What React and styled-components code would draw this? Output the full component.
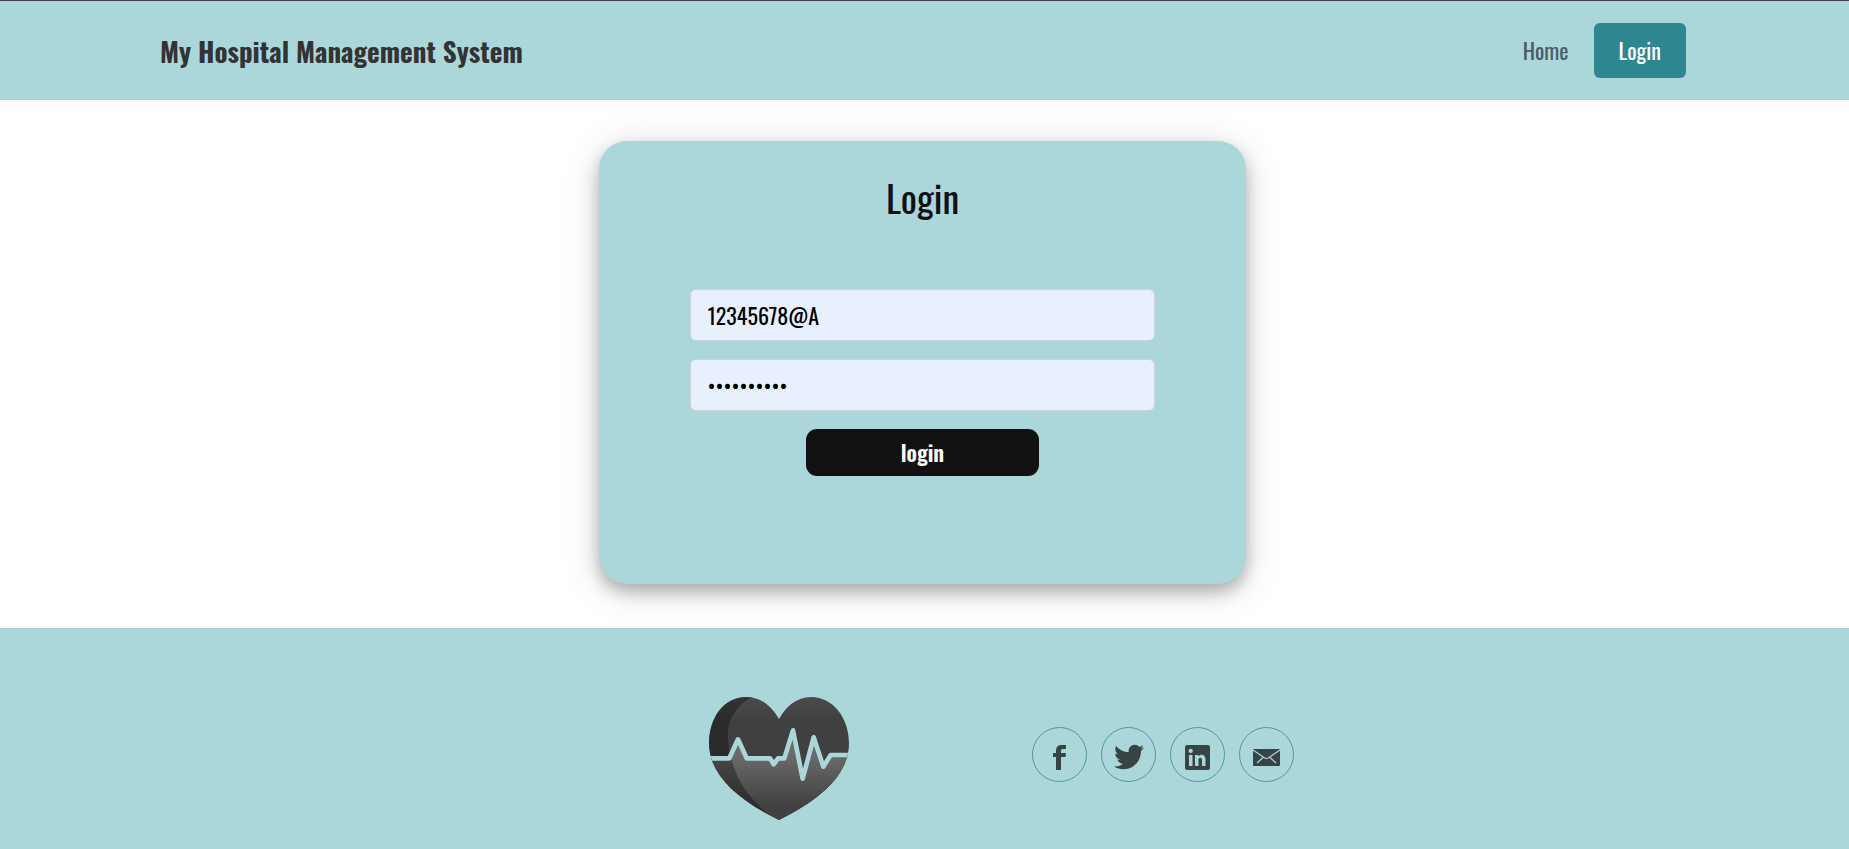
import React, { useState } from "react";
import styled, { createGlobalStyle, ThemeProvider } from "styled-components";
import { FaTwitter } from "react-icons/fa";

const theme = {
  aqua: "#abd7da",
  teal: "#2e8690",
  ink: "#111111",
  font: '"Oswald", "Liberation Sans Narrow", "DejaVu Sans Condensed", sans-serif',
};

const GlobalStyle = createGlobalStyle`
  *, *::before, *::after { box-sizing: border-box; }
  body {
    margin: 0;
    background: #ffffff;
    font-family: ${theme.font};
    color: ${theme.ink};
  }
`;

const Page = styled.div`
  display: flex;
  flex-direction: column;
  min-height: 100vh;
`;

const Header = styled.header`
  display: flex;
  align-items: center;
  justify-content: space-between;
  padding: 22px 163px 22px 160px;
  border-top: 1px solid #3e3c42;
  background: ${(p) => p.theme.aqua};
`;

const Brand = styled.a`
  font-size: 27px;
  line-height: 40px;
  font-weight: 700;
  color: #333333;
  text-decoration: none;
  white-space: nowrap;
`;

const Nav = styled.nav`
  display: flex;
  align-items: center;
  gap: 25px;
`;

const NavLink = styled.a`
  font-size: 22px;
  line-height: 31px;
  padding: ${(p) => (p.$filled ? "12px 25px" : "12px 0")};
  border-radius: 6px;
  color: ${(p) => (p.$filled ? "#ffffff" : "#4a5a68")};
  background: ${(p) => (p.$filled ? p.theme.teal : "transparent")};
  text-decoration: none;
`;

const Main = styled.main`
  display: flex;
  justify-content: center;
  padding: 41px 0 44px;
`;

const Card = styled.section`
  display: flex;
  flex-direction: column;
  align-items: center;
  width: 35%;
  margin-right: 4px;
  padding: 32px 0 108px;
  border-radius: 28px;
  background: ${(p) => p.theme.aqua};
  box-shadow: 0 8px 16px rgba(0, 0, 0, 0.26), 0 6px 40px rgba(0, 0, 0, 0.14);
`;

const Title = styled.h1`
  margin: 0 0 68px;
  font-size: 38px;
  line-height: 48px;
  font-weight: 400;
`;

const Form = styled.form`
  display: flex;
  flex-direction: column;
  align-items: center;
  gap: 18px;
  width: 72%;
`;

const Field = styled.input`
  width: 100%;
  height: 52px;
  padding: 0 17px;
  border: 1px solid #ced4da;
  border-radius: 6px;
  background: #e8f0fe;
  color: #000000;
  font-family: inherit;
  font-size: 22px;
  outline: none;
`;

const Submit = styled.button`
  width: 50%;
  height: 47px;
  padding: 0 0 2px;
  border: 0;
  border-radius: 11px;
  background: ${(p) => p.theme.ink};
  color: #ffffff;
  font-family: inherit;
  font-size: 22px;
  font-weight: 600;
  cursor: pointer;
`;

const Footer = styled.footer`
  display: flex;
  flex-grow: 1;
  align-items: flex-start;
  justify-content: center;
  gap: 183px;
  padding: 62px 0 29px 154px;
  background: ${(p) => p.theme.aqua};
`;

const HeartImage = styled.svg`
  width: 140px;
  height: 130px;
`;

const Socials = styled.ul`
  display: flex;
  align-items: center;
  gap: 14px;
  height: 128px;
  margin: 0;
  padding: 0;
  list-style: none;
`;

const SocialLink = styled.a`
  display: flex;
  align-items: center;
  justify-content: center;
  width: 55px;
  height: 55px;
  padding-top: 6px;
  border: 1px solid #4a979f;
  border-radius: 50%;
  color: #384444;
`;

const HEART =
  "M267 117C245 80 215 51 168 51C100 51 57 115 57 190C57 280 135 355 267 420C399 355 477 280 477 190C477 115 430 51 363 51C320 51 288 80 267 117Z";
const PULSE =
  "57 235 118 235 144 178 170 235 240 235 251 253 264 235 283 235 309 151 338 296 371 172 400 260 422 225 477 225";

function Heart() {
  return (
    <HeartImage viewBox="57 30 420 390" role="img" aria-label="Heartbeat">
      <defs>
        <linearGradient id="upper" x1="0" y1="51" x2="0" y2="120" gradientUnits="userSpaceOnUse">
          <stop offset="0" stopColor="#4b4b4b" />
          <stop offset="1" stopColor="#404040" />
        </linearGradient>
        <linearGradient id="lower" x1="0" y1="225" x2="0" y2="380" gradientUnits="userSpaceOnUse">
          <stop offset="0" stopColor="#6b6b6b" />
          <stop offset="1" stopColor="#404040" />
        </linearGradient>
        <clipPath id="heart">
          <path d={HEART} />
        </clipPath>
      </defs>
      <g clipPath="url(#heart)">
        <rect x="57" y="51" width="420" height="370" fill="url(#upper)" />
        <polygon points={`${PULSE} 477 421 57 421`} fill="url(#lower)" />
        <path
          d="M187 51C135 78 108 125 114 180C122 270 160 345 247 412L200 421H50V40Z"
          fill="#000000"
          fillOpacity="0.32"
        />
        <polyline
          points={PULSE}
          fill="none"
          stroke={theme.aqua}
          strokeWidth="14"
          strokeLinejoin="round"
        />
      </g>
    </HeartImage>
  );
}

function FacebookIcon() {
  return (
    <svg width="13" height="25" viewBox="0 0 13 25" fill="currentColor" aria-hidden="true">
      <path d="M3 25V12H0V8H3V6C3 2 5 0 8.5 0H13V4H10C8.500 4 8 4.700 8 6V8H13L12.500 12H8V25Z" />
    </svg>
  );
}

function LinkedinIcon() {
  return (
    <svg width="25" height="25" viewBox="0 0 25 25" fill="currentColor" aria-hidden="true">
      <path
        fillRule="evenodd"
        d="M2 0H23Q25 0 25 2V23Q25 25 23 25H2Q0 25 0 23V2Q0 0 2 0ZM4 10V21H7.500V10ZM5.700 3.800A2.100 2.100 0 1 0 5.700 8A2.100 2.100 0 1 0 5.700 3.800ZM10 10V21H13.500V15C13.500 12 17 12 17 15V21H20.500V14C20.500 9 15 8.500 13.500 11.500V10Z"
      />
    </svg>
  );
}

function MailIcon() {
  return (
    <svg width="27" height="17" viewBox="0 0 27 17" aria-hidden="true">
      <rect width="27" height="17" rx="1" fill="currentColor" />
      <path
        d="M0 1L11 8.500Q13.500 10.500 16 8.500L27 1M10 8.500L4 14M17 8.500L23 14"
        fill="none"
        stroke={theme.aqua}
        strokeWidth="1.200"
      />
    </svg>
  );
}

const socials = [
  { name: "Facebook", icon: <FacebookIcon /> },
  { name: "Twitter", icon: <FaTwitter size={30} aria-hidden="true" /> },
  { name: "LinkedIn", icon: <LinkedinIcon /> },
  { name: "Email", icon: <MailIcon /> },
];

export default function App() {
  const [username, setUsername] = useState("12345678@A");
  const [password, setPassword] = useState("12345678@A");

  return (
    <ThemeProvider theme={theme}>
      <GlobalStyle />
      <Page>
        <Header>
          <Brand href="#">My Hospital Management System</Brand>
          <Nav>
            <NavLink href="#home">Home</NavLink>
            <NavLink href="#login" $filled>
              Login
            </NavLink>
          </Nav>
        </Header>
        <Main>
          <Card>
            <Title>Login</Title>
            <Form onSubmit={(e) => e.preventDefault()}>
              <Field
                type="text"
                aria-label="Username"
                value={username}
                onChange={(e) => setUsername(e.target.value)}
              />
              <Field
                type="password"
                aria-label="Password"
                value={password}
                onChange={(e) => setPassword(e.target.value)}
              />
              <Submit type="submit">login</Submit>
            </Form>
          </Card>
        </Main>
        <Footer>
          <Heart />
          <Socials>
            {socials.map((s) => (
              <li key={s.name}>
                <SocialLink href={`#${s.name.toLowerCase()}`} aria-label={s.name}>
                  {s.icon}
                </SocialLink>
              </li>
            ))}
          </Socials>
        </Footer>
      </Page>
    </ThemeProvider>
  );
}
